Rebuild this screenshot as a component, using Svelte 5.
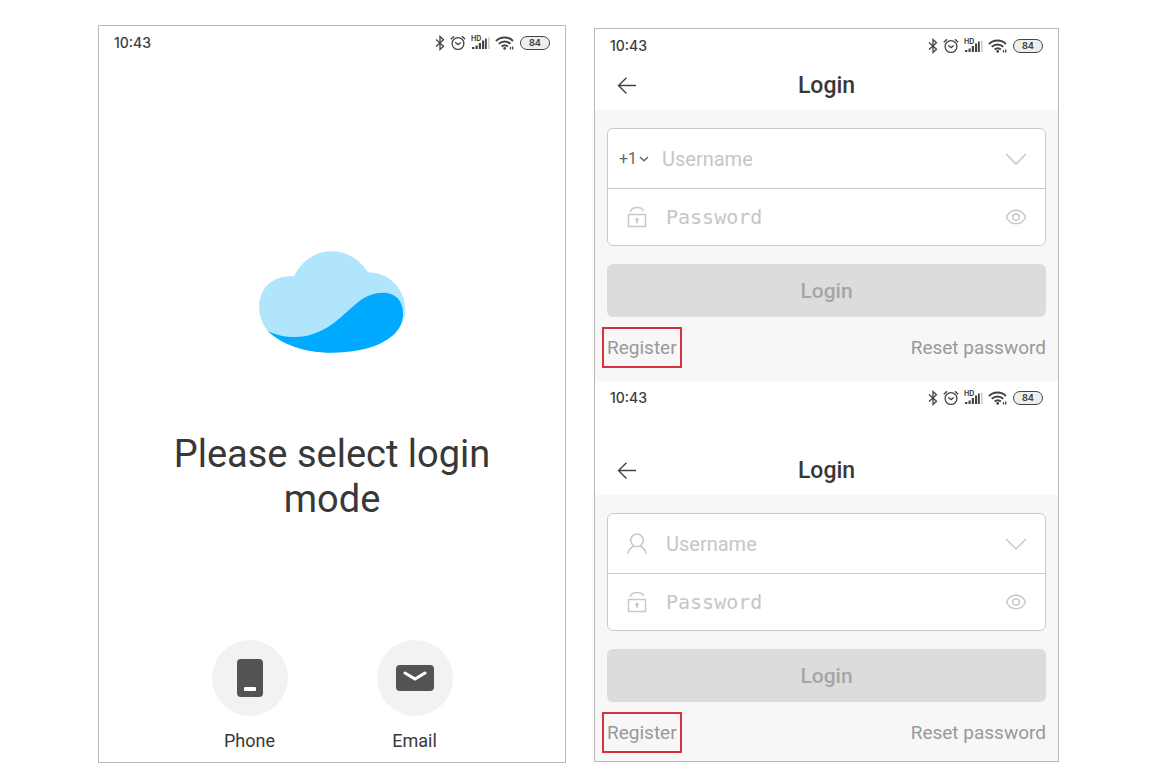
<script>
    const modes = ["Phone", "Email"];

    let screens = $state([
        { id: "phone", code: "+1", username: "", password: "" },
        { id: "email", code: null, username: "", password: "" },
    ]);
</script>

{#snippet StatusBar()}
    <div class="status">
        <time>10:43</time>
        <div class="indicators">
            <svg width="10" height="16" viewBox="0 0 10 16">
                <path d="M1 4.5 8.5 11.2 5 14.5V1.5L8.5 4.8 1 11.5" />
            </svg>
            <svg width="16" height="16" viewBox="0 0 16 16">
                <circle cx="8" cy="8.5" r="5.9" />
                <path d="M5.2 7.3 8 9.6l2.8-2.2M.8 4.3 4 1.2M15.2 4.3 12 1.2" />
            </svg>
            <svg width="19" height="16" viewBox="0 0 19 16">
                <text x="0" y="6">HD</text>
                <path
                    class="solid"
                    d="M1 12h2.4v2H1zM4.5 10.500h2.200V14H4.500zM7.800 8h2.200v6H7.800zM11 5.500h2.200V14H11zM14 3.500h1.800V14H14z"
                />
                <path class="solid faint" d="M17 2.500h1.500V14H17z" />
            </svg>
            <svg width="20" height="16" viewBox="0 0 20 16">
                <path
                    class="wave"
                    d="M1 6C5.500 1.200 13.500 1.200 18 6M3.800 8.900c3.300-3.300 8.200-3.300 11.500 0M6.600 11.600c1.900-1.700 4.400-1.700 6.300 0"
                />
                <circle class="solid" cx="9.700" cy="13.400" r="1.400" />
                <path d="M15.500 12v2.500M17.700 11.500v3" />
            </svg>
            <span class="battery">84</span>
        </div>
    </div>
{/snippet}

{#snippet LoginScreen(s)}
    <section class="screen" class:tall={!s.code}>
        {@render StatusBar()}
        <header class="bar">
            <button class="back" aria-label="Back">
                <svg width="20" height="18" viewBox="0 0 20 18">
                    <path d="M19 8.500H1.500M9.500.800 1.500 8.500l8 8" />
                </svg>
            </button>
            <h2>Login</h2>
        </header>
        <form onsubmit={(e) => e.preventDefault()}>
            <div class="fields">
                <div class="field">
                    {#if s.code}
                        <div class="code">
                            <select aria-label="Country code" bind:value={s.code}>
                                <option>+1</option>
                                <option>+44</option>
                                <option>+49</option>
                            </select>
                            <svg width="10" height="6" viewBox="0 0 10 6">
                                <path d="M1 1l4 3.700L9 1" />
                            </svg>
                        </div>
                    {:else}
                        <div class="lead">
                            <svg width="20" height="22" viewBox="0 0 20 22">
                                <circle cx="10" cy="7.300" r="6.300" />
                                <path d="M1 21c.6-4.200 2.800-6.800 6-8M19 21c-.6-4.200-2.800-6.800-6-8" />
                            </svg>
                        </div>
                    {/if}
                    <input
                        type="text"
                        placeholder="Username"
                        aria-label="Username"
                        bind:value={s.username}
                    />
                    <button class="tail" type="button" aria-label="Recent accounts">
                        <svg width="22" height="12" viewBox="0 0 22 12">
                            <path d="M1 1l10 10L21 1" />
                        </svg>
                    </button>
                </div>
                <div class="field">
                    <div class="lead">
                        <svg width="20" height="22" viewBox="0 0 20 22">
                            <path
                                d="M1.500 8.500h17v12h-17zM3 6C4 3 6.500 1.500 10 1.500c3.200 0 5.700 1.300 6.700 3.500M10 14v3.500"
                            />
                            <circle class="solid" cx="10" cy="13.500" r="1.700" />
                        </svg>
                    </div>
                    <input
                        class="mono"
                        type="password"
                        placeholder="Password"
                        aria-label="Password"
                        bind:value={s.password}
                    />
                    <button class="tail" type="button" aria-label="Show password">
                        <svg width="22" height="16" viewBox="0 0 22 16">
                            <path d="M1.500 8c4-9 15-9 19 0-4 9-15 9-19 0z" />
                            <circle cx="11" cy="8" r="3.300" />
                        </svg>
                    </button>
                </div>
            </div>
            <button class="submit" disabled>Login</button>
            <div class="links">
                <a class="register" href="#register">Register</a>
                <a href="#reset">Reset password</a>
            </div>
        </form>
    </section>
{/snippet}

<main>
    <section class="card welcome">
        {@render StatusBar()}
        <svg class="logo" width="148" height="102" viewBox="57 48 441 306">
            <path
                fill="#b1e5fc"
                d="M59 220C57 160 100 118 164 124 185 78 225 49 277 49c46 0 84 24 108 63 62 0 112 48 112 112 0 76-97 129-217 129-90 0-160-28-196-66-16-20-24-43-25-67z"
            />
            <path
                fill="#00abff"
                d="M84 287c32 16 75 24 116 16 77-15 119-77 172-113 35-22 86-24 107 5 21 32 13 79-18 106-44 37-107 52-184 52-80 0-152-25-193-66z"
            />
        </svg>
        <h1>Please select login mode</h1>
        <div class="modes">
            {#each modes as mode}
                <button class="mode">
                    <span class="disc">
                        {#if mode === "Phone"}
                            <svg width="28" height="40" viewBox="0 0 28 40">
                                <rect x="1" y="1" width="26" height="38" rx="4" fill="#535353" />
                                <rect x="8" y="29" width="12" height="4" rx="1" fill="#fff" />
                            </svg>
                        {:else}
                            <svg width="40" height="28" viewBox="0 0 40 28">
                                <rect x="1" y="1" width="38" height="26" rx="4" fill="#535353" />
                                <path
                                    d="M10 9l10 6 10-6"
                                    fill="none"
                                    stroke="#fff"
                                    stroke-width="3"
                                    stroke-linecap="round"
                                />
                            </svg>
                        {/if}
                    </span>
                    {mode}
                </button>
            {/each}
        </div>
    </section>

    <div class="card logins">
        {#each screens as s (s.id)}
            {@render LoginScreen(s)}
        {/each}
    </div>
</main>

<style>
    :global(body) {
        margin: 0;
        background: #fff;
    }
    main {
        display: grid;
        grid-template-columns: 468fr 465fr;
        gap: 28px;
        align-items: start;
        padding: 25px 115px 18px 98px;
        font-family: Roboto, sans-serif;
        color: #383838;
    }
    button,
    input,
    select {
        margin: 0;
        padding: 0;
        border: 0;
        background: none;
        font-family: inherit;
        color: inherit;
    }
    svg {
        display: block;
        flex: none;
    }
    .card {
        border: 1px solid #b9b9b9;
        background: #fff;
    }

    .status {
        display: flex;
        justify-content: space-between;
        align-items: center;
        height: 33px;
        padding: 0 15px;
        time {
            font: 500 14px Inter, sans-serif;
            color: #3c3c3c;
        }
    }
    .indicators {
        display: flex;
        align-items: center;
        gap: 5px;
        svg {
            fill: none;
            stroke: #444;
            stroke-width: 1.3;
        }
        .wave {
            stroke-width: 2;
        }
        text {
            font: 700 7px Inter, sans-serif;
            fill: #444;
            stroke: none;
        }
        .solid {
            fill: #444;
            stroke: none;
        }
        .faint {
            fill: #ccc;
        }
    }
    .battery {
        box-sizing: border-box;
        width: 30px;
        height: 14px;
        border: 1px solid #444;
        border-radius: 7px;
        background: #eee;
        font: 700 9px/12px Inter, sans-serif;
        text-align: center;
        color: #444;
    }

    .welcome {
        display: flex;
        flex-direction: column;
        align-items: center;
        padding-bottom: 9px;
        .status {
            box-sizing: border-box;
            width: 100%;
        }
    }
    .logo {
        margin-top: 192px;
    }
    h1 {
        max-width: 340px;
        margin: 79px 0 118px;
        font-size: 38px;
        font-weight: 400;
        line-height: 45px;
        text-align: center;
    }
    .modes {
        display: flex;
        gap: 89px;
    }
    .mode {
        display: flex;
        flex-direction: column;
        align-items: center;
        gap: 13px;
        font-size: 18px;
        line-height: 24px;
    }
    .disc {
        display: grid;
        place-items: center;
        width: 76px;
        height: 76px;
        border-radius: 50%;
        background: #f2f2f2;
    }

    .logins {
        margin-top: 3px;
    }
    .bar {
        display: grid;
        grid-template-columns: 64px 1fr 64px;
        align-items: center;
        height: 48px;
        .tall & {
            padding-top: 33px;
        }
    }
    .back {
        justify-self: center;
        svg {
            fill: none;
            stroke: #444;
            stroke-width: 1.4;
        }
    }
    h2 {
        margin: 0;
        font-size: 23px;
        font-weight: 500;
        line-height: 28px;
        text-align: center;
    }
    form {
        padding: 18px 12px 13px;
        background: #f7f7f7;
        .tall & {
            padding-bottom: 8px;
        }
    }
    .fields {
        border: 1px solid #cbcbcb;
        border-radius: 6px;
        background: #fff;
        overflow: hidden;
    }
    .field {
        display: flex;
        align-items: center;
        height: 59px;
        padding-right: 18px;
        svg {
            fill: none;
            stroke: #c8c8c8;
            stroke-width: 1.5;
        }
        .solid {
            fill: #c8c8c8;
            stroke: none;
        }
    }
    .field + .field {
        height: 56px;
        border-top: 1px solid #cbcbcb;
    }
    .lead {
        display: grid;
        place-items: center;
        width: 58px;
    }
    .code {
        display: flex;
        align-items: center;
        box-sizing: border-box;
        width: 54px;
        padding-left: 11px;
        select {
            appearance: none;
            width: 20px;
            font-size: 16px;
            color: #666;
        }
        svg {
            stroke: #666;
        }
    }
    input {
        flex: 1;
        min-width: 0;
        height: 100%;
        outline: none;
        font-size: 20px;
    }
    input::placeholder {
        color: #c6c6c6;
    }
    .mono {
        font-family: "DejaVu Sans Mono", monospace;
    }
    .submit {
        width: 100%;
        height: 53px;
        margin-top: 18px;
        border-radius: 6px;
        background: #dcdcdc;
        font-size: 21px;
        font-weight: 500;
        color: #a6a6a6;
    }
    .links {
        display: flex;
        justify-content: space-between;
        align-items: center;
        margin-top: 10px;
        a {
            font-size: 19px;
            line-height: 37px;
            color: #999;
            text-decoration: none;
        }
        .register {
            margin-left: -5px;
            padding: 0 3px;
            border: 2px solid #d8303c;
        }
    }
</style>
